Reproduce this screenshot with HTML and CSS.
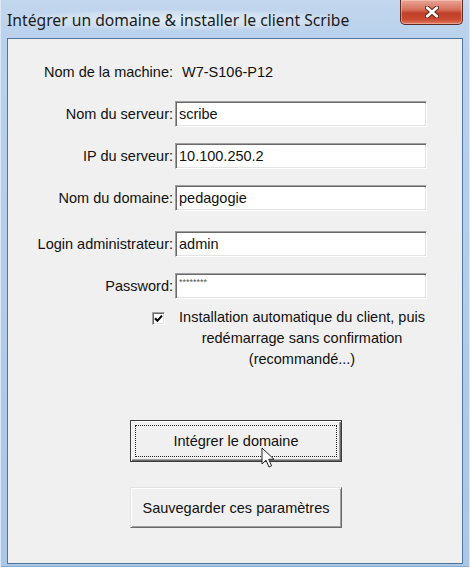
FILE: index.html
```
<!DOCTYPE html>
<html lang="fr">
<head>
<meta charset="utf-8">
<title>Intégrer un domaine</title>
<link rel="stylesheet" href="styles.css">
</head>
<body>
<div class="window">
  <div class="titlebar">
    <span class="title">Intégrer un domaine &amp; installer le client Scribe</span>
    <div class="close">
      <svg width="14" height="12" viewBox="0 0 14 12">
        <path d="M2.2 1.8 L11.8 10.2 M11.8 1.8 L2.2 10.2" stroke="#5a2418" stroke-width="4.6" stroke-linecap="round"/>
        <path d="M2.2 1.8 L11.8 10.2 M11.8 1.8 L2.2 10.2" stroke="#ffffff" stroke-width="2.8" stroke-linecap="round"/>
      </svg>
    </div>
  </div>
  <div class="client">
    <div class="row machine">
      <span class="label">Nom de la machine:</span>
      <span class="value">W7-S106-P12</span>
    </div>
    <div class="form">
      <div class="row">
        <label class="label">Nom du serveur:</label>
        <input class="field" type="text" value="scribe" readonly>
      </div>
      <div class="row">
        <label class="label">IP du serveur:</label>
        <input class="field" type="text" value="10.100.250.2" readonly>
      </div>
      <div class="row">
        <label class="label">Nom du domaine:</label>
        <input class="field" type="text" value="pedagogie" readonly>
      </div>
      <div class="row row-spaced">
        <label class="label">Login administrateur:</label>
        <input class="field" type="text" value="admin" readonly>
      </div>
      <div class="row">
        <label class="label">Password:</label>
        <input class="field field-pw" type="text" value="********" readonly>
      </div>
    </div>
    <div class="option">
      <span class="checkbox">
        <svg width="9" height="9" viewBox="0 0 9 9"><path d="M1 4.2 L3.4 6.8 L8 1.6" fill="none" stroke="#000" stroke-width="2"/></svg>
      </span>
      <span class="option-text">Installation automatique du client, puis<br>redémarrage sans confirmation<br>(recommandé...)</span>
    </div>
    <div class="buttons">
      <div class="btn-wrap">
        <button class="btn btn-default"><span class="focus">Intégrer le domaine</span></button>
        <svg class="cursor" width="14" height="22" viewBox="0 0 14 22">
          <path d="M1 1 L1 17 L5 13.2 L8 20 L10.6 18.8 L7.7 12.3 L13 12.3 Z" fill="#fff" stroke="#222" stroke-width="1" stroke-linejoin="round"/>
        </svg>
      </div>
      <button class="btn">Sauvegarder ces paramètres</button>
    </div>
  </div>
</div>
</body>
</html>
```
FILE: styles.css
```
body {
  margin: 0;
  background: #ffffff;
  font-family: "Liberation Sans", Arial, sans-serif;
}

.window {
  width: 470px;
  height: 567px;
  box-sizing: border-box;
  padding: 0 7px 3px 7px;
  display: flex;
  flex-direction: column;
  background: linear-gradient(to bottom, #c3d7ee 0px, #b9d1ec 40px, #abc7e7 100%);
  box-shadow: inset 1px 0 0 #dbe7f5, inset -1px 0 0 #dbe7f5, inset 0 -1px 0 #8aa9cf;
}

.titlebar {
  height: 38px;
  flex: none;
  display: flex;
  justify-content: space-between;
  align-items: flex-start;
}

.title {
  font-family: "Noto Sans", "Open Sans", sans-serif;
  font-size: 15.7px;
  line-height: 20px;
  margin-top: 10px;
  color: #1b1b1b;
  background: radial-gradient(ellipse at center, rgba(255,255,255,0.55) 0%, rgba(255,255,255,0.25) 55%, rgba(255,255,255,0) 75%);
}

.close {
  width: 63px;
  height: 25px;
  box-sizing: border-box;
  border: 1px solid #5b2a22;
  border-top: none;
  border-radius: 0 0 5px 5px;
  background: linear-gradient(to bottom, #e8a596 0%, #d7705c 40%, #c0402a 55%, #c9482f 80%, #de7a5c 100%);
  box-shadow: inset 0 0 0 1px rgba(255,220,210,0.45);
  display: flex;
  justify-content: center;
  align-items: center;
}

.client {
  flex: 1;
  background: #f0f0f0;
  border: 1px solid #52759b;
  display: flex;
  flex-direction: column;
}

.row {
  display: grid;
  grid-template-columns: 165px 252px;
  column-gap: 2px;
  align-items: center;
  font-size: 14.5px;
  color: #111;
}

.label {
  text-align: right;
  white-space: nowrap;
}

.machine {
  margin-top: 24px;
  line-height: 18px;
}

.machine .value {
  padding-left: 7px;
}

.form {
  margin-top: 20px;
  display: flex;
  flex-direction: column;
  gap: 16px;
}

.row-spaced {
  margin-top: 4px;
}

.field {
  width: 252px;
  height: 26px;
  box-sizing: border-box;
  margin: 0;
  padding: 0 3px;
  font-family: "Liberation Sans", Arial, sans-serif;
  font-size: 14.5px;
  color: #111;
  background: #ffffff;
  border: 1px solid;
  border-color: #a0a0a0 #ffffff #ffffff #a0a0a0;
  box-shadow: inset 1px 1px 0 #696969, inset -1px -1px 0 #e3e3e3;
  outline: none;
}

.field-pw {
  font-size: 9px;
  color: #555;
  padding-bottom: 9px;
  letter-spacing: 0;
}

.option {
  margin-top: 8px;
  margin-left: 144px;
  display: flex;
  align-items: flex-start;
  gap: 13px;
}

.checkbox {
  width: 13px;
  height: 13px;
  margin-top: 5px;
  box-sizing: border-box;
  background: #ffffff;
  border: 1px solid;
  border-color: #a0a0a0 #ffffff #ffffff #a0a0a0;
  box-shadow: inset 1px 1px 0 #696969, inset -1px -1px 0 #e3e3e3;
  display: flex;
  justify-content: center;
  align-items: center;
}

.option-text {
  width: 248px;
  text-align: center;
  font-size: 14.5px;
  line-height: 21px;
  color: #111;
}

.buttons {
  margin-top: 50px;
  margin-left: 122px;
  display: flex;
  flex-direction: column;
  gap: 25px;
}

.btn-wrap {
  position: relative;
  width: 212px;
}

.btn {
  width: 212px;
  height: 41px;
  box-sizing: border-box;
  padding: 0;
  margin: 0;
  font-family: "Liberation Sans", Arial, sans-serif;
  font-size: 14.5px;
  color: #111;
  background: #f0f0f0;
  border: 1px solid;
  border-color: #e3e3e3 #696969 #696969 #e3e3e3;
  box-shadow: inset 1px 1px 0 #ffffff, inset -1px -1px 0 #a0a0a0;
}

.btn-default {
  height: 42px;
  border: 1px solid #3c3c3c;
  box-shadow: inset 1px 1px 0 #ffffff, inset -1px -1px 0 #696969, inset -2px -2px 0 #a0a0a0;
  display: flex;
  padding: 4px;
}

.focus {
  flex: 1;
  border: 1px dotted #222;
  display: flex;
  justify-content: center;
  align-items: center;
}

.cursor {
  position: absolute;
  left: 131px;
  top: 27px;
}
```
